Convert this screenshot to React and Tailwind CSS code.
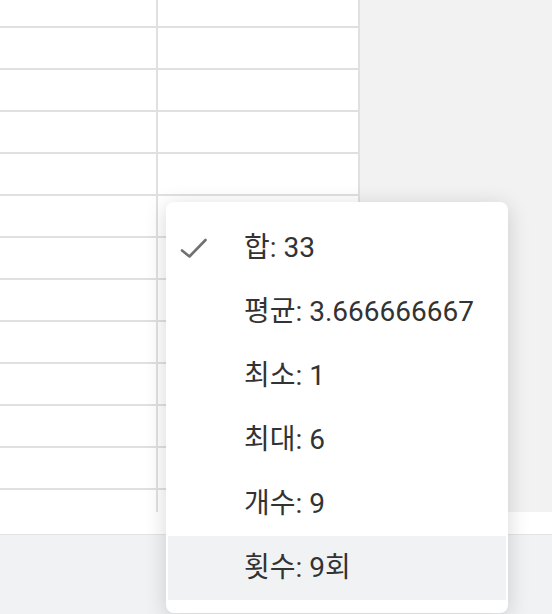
import React from "react";

// Status-bar summary menu over a spreadsheet grid
const items = [
  { label: "합: 33", checked: true },
  { label: "평균: 3.666666667" },
  { label: "최소: 1" },
  { label: "최대: 6" },
  { label: "개수: 9" },
  { label: "횟수: 9회", active: true },
];

const GridColumn = ({ width }) => (
  <div className={`flex flex-col h-[512px] border-r-2 border-[#e0e0e0] ${width}`}>
    <div className="h-[28px] shrink-0 border-b-2 border-[#e0e0e0]" />
    {Array.from({ length: 11 }).map((_, i) => (
      <div key={i} className="h-[42px] shrink-0 border-b-2 border-[#e0e0e0]" />
    ))}
  </div>
);

const CheckIcon = () => (
  <svg width="28" height="22" viewBox="0 0 28 22" className="text-[#707070]">
    <path
      d="M2 13.5 L9.5 19.5 L25.5 3"
      fill="none"
      stroke="currentColor"
      strokeWidth="2.6"
      strokeLinecap="round"
      strokeLinejoin="round"
    />
  </svg>
);

export default function App() {
  return (
    <div className="relative w-[552px] h-[614px] overflow-hidden bg-white font-['Roboto','Noto_Sans_CJK_KR',sans-serif]">
      <div className="flex h-[512px]">
        <GridColumn width="w-[158px]" />
        <GridColumn width="w-[202px]" />
        <div className="flex-1 bg-[#f2f2f2]" />
      </div>
      <div className="h-[22px] bg-white" />
      <div className="h-[80px] bg-[#f1f2f4] border-t border-[#e4e4e4]" />

      <div className="absolute left-[166px] top-[202px] w-[342px] h-[411px] rounded-lg bg-white px-[2px] pt-[14px] pb-[13px] shadow-[0_4px_22px_rgba(0,0,0,0.16)]">
        {items.map((item) => (
          <div
            key={item.label}
            className={`relative flex items-center h-[64px] pl-[76px] text-[28px] leading-none text-[#333333] ${
              item.active ? "bg-[#f1f2f4]" : ""
            }`}
          >
            {item.checked && (
              <span className="absolute left-[12px] top-[21px]">
                <CheckIcon />
              </span>
            )}
            <span className="-mt-[1px]">{item.label}</span>
          </div>
        ))}
      </div>
    </div>
  );
}
